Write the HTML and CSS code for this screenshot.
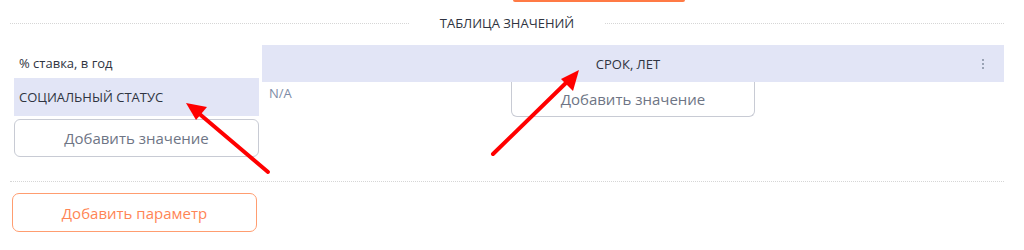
FILE: index.html
```html
<!DOCTYPE html>
<html lang="ru">
<head>
    <meta charset="UTF-8">
    <meta name="viewport" content="width=device-width, initial-scale=1.0">
    <title>Таблица значений</title>
    <link rel="stylesheet" href="styles.css">
</head>
<body>
    <div class="page">
        <div class="top-tab"></div>

        <div class="section-title">
            <span class="dots"></span>
            <span class="title-text">ТАБЛИЦА ЗНАЧЕНИЙ</span>
            <span class="dots"></span>
        </div>

        <div class="table">
            <div class="param-col">
                <div class="param-label">% ставка, в год</div>
                <div class="param-cell">СОЦИАЛЬНЫЙ СТАТУС</div>
                <button class="value-btn">Добавить значение</button>
            </div>
            <div class="values-col">
                <div class="values-head">
                    <span class="head-title">СРОК, ЛЕТ</span>
                    <span class="kebab"><i></i><i></i><i></i></span>
                </div>
                <div class="values-body">
                    <div class="na">N/A</div>
                    <button class="value-btn value-btn-open">Добавить значение</button>
                </div>
            </div>
        </div>

        <div class="divider"></div>

        <button class="add-param">Добавить параметр</button>

        <svg class="arrows" width="1024" height="250" viewBox="0 0 1024 250">
            <line x1="268" y1="172" x2="196" y2="111" stroke="#f00" stroke-width="4" stroke-linecap="round"/>
            <polygon points="186,103 207,107 196,120" fill="#f00"/>
            <line x1="493" y1="154" x2="570" y2="79" stroke="#f00" stroke-width="4" stroke-linecap="round"/>
            <polygon points="579,70 573,91 561,79" fill="#f00"/>
        </svg>
    </div>
</body>
</html>
```

FILE: styles.css
```css
body {
    margin: 0;
    font-family: "Open Sans", "Noto Sans", sans-serif;
    background: #fff;
    color: #2f3441;
}

.page {
    position: relative;
    width: 1024px;
    height: 250px;
    overflow: hidden;
}

.top-tab {
    width: 172px;
    height: 2px;
    margin-left: 513px;
    background: #ff7a45;
    border-radius: 0 0 3px 3px;
}

.section-title {
    display: flex;
    align-items: center;
    margin: 12px 20px 0 10px;
    height: 18px;
}

.dots {
    flex: 1;
    border-top: 1px dotted #d6d6d6;
}

.title-text {
    padding: 0 31px;
    font-size: 13px;
    line-height: 18px;
}

.table {
    display: flex;
    gap: 3px;
    margin: 13px 20px 0 14px;
}

.param-col {
    width: 245px;
    display: flex;
    flex-direction: column;
}

.param-label {
    height: 33px;
    box-sizing: border-box;
    padding: 9px 0 0 5px;
    font-size: 13px;
    line-height: 18px;
}

.param-cell {
    height: 38px;
    line-height: 38px;
    padding-left: 5px;
    background: #e2e5f6;
    font-size: 13px;
}

.value-btn {
    margin-top: 3px;
    height: 38px;
    background: #fff;
    border: 1px solid #c8cbd4;
    border-radius: 6px;
    font-family: inherit;
    font-size: 15px;
    color: #6e7585;
}

.values-col {
    flex: 1;
}

.values-head {
    display: flex;
    align-items: center;
    height: 37px;
    background: #e2e5f6;
}

.head-title {
    flex: 1;
    text-align: center;
    padding-left: 12px;
    font-size: 13px;
}

.kebab {
    display: flex;
    flex-direction: column;
    gap: 2px;
    margin-right: 20px;
}

.kebab i {
    width: 2px;
    height: 2px;
    background: #9aa3b5;
}

.values-body {
    display: flex;
}

.na {
    width: 249px;
    box-sizing: border-box;
    padding: 2px 0 0 7px;
    font-size: 13px;
    line-height: 18px;
    color: #7d8ca6;
}

.value-btn-open {
    width: 244px;
    height: 35px;
    margin-top: 0;
    border-top: none;
    border-radius: 0 0 6px 6px;
    padding-bottom: 2px;
}

.divider {
    margin: 24px 20px 0 10px;
    border-top: 1px dotted #d6d6d6;
}

.add-param {
    display: block;
    margin: 11px 0 0 12px;
    width: 245px;
    height: 39px;
    background: #fff;
    border: 1px solid #ff9d70;
    border-radius: 7px;
    font-family: inherit;
    font-size: 15px;
    color: #ff8555;
}

.arrows {
    position: absolute;
    top: 0;
    left: 0;
    pointer-events: none;
}
```
